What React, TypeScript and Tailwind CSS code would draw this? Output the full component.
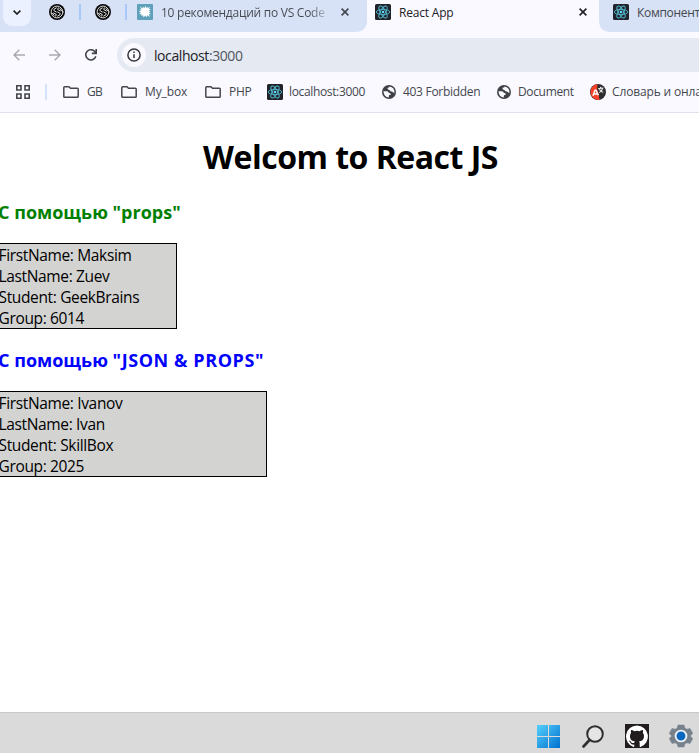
import { ReactNode } from "react";

type IconProps = { className?: string };

function ReactLogo({ className = "" }: IconProps) {
  return (
    <svg viewBox="0 0 16 16" className={`size-4 shrink-0 ${className}`}>
      <rect width="16" height="16" rx="1.5" fill="#20232a" />
      <g fill="none" stroke="#53b9d1" strokeWidth="0.9">
        <ellipse cx="8" cy="8" rx="6.7" ry="2.6" />
        <ellipse cx="8" cy="8" rx="6.7" ry="2.6" transform="rotate(60 8 8)" />
        <ellipse cx="8" cy="8" rx="6.7" ry="2.6" transform="rotate(120 8 8)" />
      </g>
      <circle cx="8" cy="8" r="1.3" fill="#61dafb" />
    </svg>
  );
}

function KnotLogo() {
  return (
    <svg viewBox="0 0 16 16" className="size-4 shrink-0">
      <circle cx="8" cy="8" r="8" fill="#080808" />
      <g fill="none" stroke="#ededed" strokeWidth="1" strokeLinecap="round">
        <circle cx="8" cy="8" r="5.900" strokeWidth=".9" />
        <path d="M7.300 3.900 5 5.300q-.9.800.2 1.500L7.300 8M8.700 12.100 11 10.700q.9-.8-.2-1.500L8.700 8M9.300 3.900 8.700 5.500 11.300 7M6.700 12.100 7.300 10.500 4.700 9M11 4.700l1.500 2M5 11.300l-1.500-2" />
      </g>
    </svg>
  );
}

function SplashLogo() {
  return (
    <svg viewBox="0 0 16 16" className="size-4 shrink-0">
      <rect width="16" height="16" rx="1" fill="#5fa0ba" />
      <path
        d="m2.700 2.500 2.800 2L6 2.500 7.200 4.200 8.600 1.800 9 4l1.700-1.300v1.500l2.500-1.500L11.800 5l2 .1-1.700 1.500 1.200 1.300-1.300.6 2 1.800-2.200-.1 1 2.800-2.600-1.700-.4 2-1.500-1.700-1.700 1.800-.5-2.200-1.800.8.4-1.800-2.500.1 1.700-1.500-2.200-1.200 2.300-.6-1.500-1.800 2.100.2Z"
        fill="#fff"
      />
    </svg>
  );
}

function Globe() {
  return (
    <svg viewBox="0 0 14 14" className="size-[14px] shrink-0">
      <circle cx="7" cy="7" r="7" fill="#3f4245" />
      <path
        d="M1.4 6.2h3.1q1.8.1 2.1 1.3.2.8 1.5.8.7.1.6.9-.1.8-1.1.9-.7.1-.8.9v1.5Q2 12 1.4 6.2ZM7.5 1.4q-.1 1.2-1 1.2-1 0-1 .9 0 1.1 1.2 1.2.8 0 1.2.8.4 1.1 1.7 1 1.2 0 1.4.9l1.5.4Q12.700 2.200 7.500 1.400Z"
        fill="#faf9ff"
      />
    </svg>
  );
}

function DictionaryLogo() {
  return (
    <svg viewBox="0 0 16 16" className="size-4 shrink-0">
      <circle cx="8" cy="8" r="8" fill="#2d2d2f" />
      <path d="M7.500 0A8 8 0 1 0 9.500 15.900L8.500 9 7 5Z" fill="#fa4028" />
      <path d="M3 11.800 5 6.200h1l2.400 5M4 10h3.400" fill="none" stroke="#fff" strokeWidth="1.500" />
      <path d="M8 4.700 13.500 4M10.500 2.800l.4 1.500M12.600 4.300Q12 7.300 9.300 8.500M9.300 5.300q1.300 2.500 4 2.800" fill="none" stroke="#eee" strokeWidth="1.100" />
    </svg>
  );
}

function Folder() {
  return (
    <svg viewBox="0 0 16 12" className="h-3 w-4 shrink-0">
      <path d="M1.600.8H6l1.500 1.500h6.900q.8 0 .8.8v7.300q0 .8-.8.8H1.600q-.8 0-.8-.8V1.600q0-.8.8-.8Z" fill="none" stroke="#45474b" strokeWidth="1.500" />
    </svg>
  );
}

function Close({ className = "" }: IconProps) {
  return (
    <svg viewBox="0 0 8 8" className={`size-2 shrink-0 ${className}`}>
      <path d="m.6.6 6.800 6.800M7.400.6.600 7.400" stroke="currentColor" strokeWidth="1.600" />
    </svg>
  );
}

function TabStrip() {
  return (
    <div className="flex h-8 bg-[#d8e2f6] text-[12px] text-[#43474e]">
      <div className="flex w-[367px] shrink-0 items-start">
        <div className="ml-[3px] flex h-[26px] w-7 items-center justify-center rounded-b-[9px] bg-[#ebf1fe]">
          <svg viewBox="0 0 8 5" className="mt-[-2px] h-[5px] w-2">
            <path d="m.6.6L4 4 7.400.6" fill="none" stroke="#1d1d20" strokeWidth="1.600" />
          </svg>
        </div>
        <div className="flex h-6 items-center pl-[18px]">
          <KnotLogo />
          <span className="ml-[14px] h-4 w-[2px] bg-[#a8c7fa]" />
          <span className="w-[14px]" />
          <KnotLogo />
          <span className="ml-[14px] h-4 w-[2px] bg-[#a8c7fa]" />
          <span className="w-[10px]" />
          <SplashLogo />
          <span className="mt-0.5 ml-2 w-[169px] whitespace-nowrap bg-linear-to-r from-[#43474e] from-88% to-[#43474e]/20 to-98% bg-clip-text leading-6 tracking-[-0.26px] text-transparent">
            10 рекомендаций по VS Code
          </span>
          <Close className="ml-[11px]" />
        </div>
      </div>
      <div className="relative flex h-8 w-[232px] shrink-0 items-start bg-[#faf9ff] text-[#202124]">
        <svg viewBox="0 0 12 12" className="absolute bottom-0 -left-3 size-3">
          <path d="M12 0Q12 12 0 12H12Z" fill="#faf9ff" />
        </svg>
        <svg viewBox="0 0 12 12" className="absolute -right-3 bottom-0 size-3">
          <path d="M0 0Q0 12 12 12H0Z" fill="#faf9ff" />
        </svg>
        <div className="flex h-6 w-full items-center pl-2">
          <ReactLogo />
          <span className="mt-0.5 ml-2 tracking-[-0.2px]">React App</span>
          <Close className="mr-[12px] ml-auto" />
        </div>
      </div>
      <div className="flex h-6 min-w-0 flex-1 items-center pl-[14px]">
        <ReactLogo />
        <span className="mt-0.5 ml-2 whitespace-nowrap tracking-[-0.3px]">Компонент</span>
      </div>
    </div>
  );
}

function AddressRow() {
  return (
    <div className="flex h-[46px] items-center">
      <svg viewBox="0 0 12 12" className="ml-[13px] size-3">
        <path d="M12 6H1M6.300.7 1 6l5.300 5.300" fill="none" stroke="#a9a9ae" strokeWidth="1.500" />
      </svg>
      <svg viewBox="0 0 12 12" className="ml-6 size-3">
        <path d="M0 6h11M5.700.7 11 6l-5.300 5.300" fill="none" stroke="#a9a9ae" strokeWidth="1.500" />
      </svg>
      <svg viewBox="0 0 12 12" className="ml-6 size-3">
        <path d="M10.800 7.200A5.100 5.100 0 1 1 10 2.800L11 4.200M11.200 0v4.400H6.800" fill="none" stroke="#43474e" strokeWidth="1.600" />
      </svg>
      <div className="ml-5 flex h-[34px] flex-1 items-center rounded-l-full bg-[#e5e9f2] pl-[5px]">
        <span className="flex size-6 items-center justify-center rounded-full bg-[#faf9ff]">
          <svg viewBox="0 0 14 14" className="size-[14px]">
            <circle cx="7" cy="7" r="6.100" fill="none" stroke="#34373c" strokeWidth="1.500" />
            <path d="M7 6.200V10M7 3.600v1.500" stroke="#34373c" strokeWidth="1.500" />
          </svg>
        </span>
        <span className="ml-2 text-[14px] tracking-[-0.42px] text-[#202124]">
          localhost<span className="text-[#51555c]">:3000</span>
        </span>
      </div>
    </div>
  );
}

function Bookmark({ icon, className, children }: { icon: ReactNode; className: string; children: ReactNode }) {
  return (
    <div className={`flex shrink-0 items-center whitespace-nowrap ${className}`}>
      {icon}
      {children}
    </div>
  );
}

function BookmarksBar() {
  return (
    <div className="flex h-[35px] items-start border-b border-[#dfe1eb] text-[12px] text-[#43474e]">
      <div className="flex h-7 items-center">
        <svg viewBox="0 0 14 14" className="ml-4 size-[14px] shrink-0" fill="none" stroke="#45474b" strokeWidth="1.600">
          <path d="M.8.8h4.200v4.200H.8zM9 .8h4.200v4.200H9zM.8 9h4.200v4.200H.8zM9 9h4.200v4.200H9z" />
        </svg>
        <span className="ml-[15px] h-4 w-[2px] shrink-0 bg-[#d3e3fd]" />
        <Bookmark className="ml-4 w-[58px] gap-2 tracking-[-0.6px]" icon={<Folder />}>GB</Bookmark>
        <Bookmark className="w-[84px] gap-2 tracking-[-0.1px]" icon={<Folder />}>My_box</Bookmark>
        <Bookmark className="w-[62px] gap-2 tracking-[-0.3px]" icon={<Folder />}>PHP</Bookmark>
        <Bookmark className="w-[115px] gap-[6px] tracking-[-0.35px]" icon={<ReactLogo />}>localhost:3000</Bookmark>
        <Bookmark className="w-[115px] gap-[7px] tracking-[-0.3px]" icon={<Globe />}>403 Forbidden</Bookmark>
        <Bookmark className="w-[93px] gap-[7px] tracking-[-0.35px]" icon={<Globe />}>Document</Bookmark>
        <Bookmark className="gap-[6px] tracking-[-0.15px]" icon={<DictionaryLogo />}>Словарь и онла</Bookmark>
      </div>
    </div>
  );
}

type Student = { firstName: string; lastName: string; school: string; group: number };

function Card({ student, className }: { student: Student; className: string }) {
  return (
    <div className={`-ml-px h-[86px] border border-black bg-[#d3d3d1] pt-px text-[15.5px] leading-[21px] tracking-[-0.35px] text-black ${className}`}>
      <div className="-ml-[1.5px]">
        <p>FirstName: {student.firstName}</p>
        <p>LastName: {student.lastName}</p>
        <p>Student: {student.school}</p>
        <p>Group: {student.group}</p>
      </div>
    </div>
  );
}

function Taskbar() {
  return (
    <footer className="flex h-[41px] items-center border-t border-[#c8c8c8] bg-[#dadada] pt-[6px] pl-[537px]">
      <svg viewBox="0 0 23 23" className="size-[23px] shrink-0">
        <defs>
          <linearGradient id="win" x1="0" y1="0" x2="23" y2="23" gradientUnits="userSpaceOnUse">
            <stop stopColor="#55d0fb" />
            <stop offset="1" stopColor="#0070cf" />
          </linearGradient>
        </defs>
        <path d="M0 0h11v11H0zM12 0h11v11H12zM0 12h11v11H0zM12 12h11v11H12z" fill="url(#win)" />
      </svg>
      <svg viewBox="0 0 22 23" className="ml-[22px] h-[23px] w-[22px] shrink-0">
        <circle cx="13" cy="9" r="7.800" fill="#e5e5e5" stroke="#2f2f2f" strokeWidth="2" />
        <path d="m7.500 15-6 6.500" stroke="#2f2f2f" strokeWidth="2.600" strokeLinecap="round" />
      </svg>
      <svg viewBox="0 0 24 24" className="ml-[21px] size-6 shrink-0">
        <rect width="24" height="24" fill="#211d1f" />
        <g transform="translate(1 1.200) scale(.917)">
          <path
            fill="#fff"
            d="M12 .3a12 12 0 0 0-3.800 23.380c.6.120.83-.260.830-.570L9 21.070c-3.340.720-4.040-1.610-4.040-1.610-.550-1.390-1.340-1.760-1.340-1.760-1.080-.740.090-.730.090-.730 1.200.090 1.830 1.240 1.830 1.240 1.080 1.830 2.810 1.300 3.500 1 .1-.780.420-1.310.760-1.610-2.670-.300-5.470-1.330-5.470-5.930 0-1.310.470-2.380 1.240-3.220-.140-.300-.540-1.520.1-3.180 0 0 1-.320 3.300 1.230a11.500 11.500 0 0 1 6 0c2.280-1.550 3.290-1.230 3.290-1.230.640 1.660.240 2.880.120 3.180a4.650 4.650 0 0 1 1.230 3.220c0 4.610-2.800 5.630-5.480 5.920.420.360.810 1.100.810 2.220l-.010 3.290c0 .310.200.690.820.570A12 12 0 0 0 12 .3"
          />
        </g>
      </svg>
      <svg viewBox="0 0 24 24" className="ml-5 size-6 shrink-0">
        <path
          d="M9 1h6l.8 3 2.200 1.200 3-.8 2.800 5-2.200 2.100v1l2.200 2.100-2.800 5-3-.8-2.200 1.200-.8 3H9l-.8-3L6 18.800l-3 .8-2.800-5 2.200-2.100v-1L.2 9.400l2.800-5 3 .8L8.200 4Z"
          fill="#77818c"
          stroke="#77818c"
          strokeLinejoin="round"
          strokeWidth=".5"
        />
        <circle cx="12" cy="12" r="5.400" fill="#0b66bd" stroke="#eef3f7" strokeWidth="1.900" />
      </svg>
    </footer>
  );
}

export default function App() {
  return (
    <div className="flex h-[753px] w-[699px] flex-col overflow-hidden bg-white font-['Open_Sans','Noto_Sans',sans-serif]">
      <header className="shrink-0 bg-[#faf9ff]">
        <TabStrip />
        <AddressRow />
        <BookmarksBar />
      </header>
      <main className="min-h-0 flex-1 text-black">
        <h1 className="mt-[22px] pl-[2px] text-center text-[32px] leading-[43px] font-bold tracking-[-0.5px]">Welcom to React JS</h1>
        <h3 className="mt-[22px] -ml-0.5 text-[18px] leading-[25px] font-bold text-[#008000]">С помощью "props"</h3>
        <Card className="mt-[18px] w-[178px]" student={{ firstName: "Maksim", lastName: "Zuev", school: "GeekBrains", group: 6014 }} />
        <h3 className="mt-[19px] -ml-0.5 text-[18px] leading-[25px] font-bold text-[#0000ff]">
          С помощью <span className="tracking-[0.57px]">"JSON &amp; PROPS"</span>
        </h3>
        <Card className="mt-[18px] w-[268px]" student={{ firstName: "Ivanov", lastName: "Ivan", school: "SkillBox", group: 2025 }} />
      </main>
      <Taskbar />
    </div>
  );
}
